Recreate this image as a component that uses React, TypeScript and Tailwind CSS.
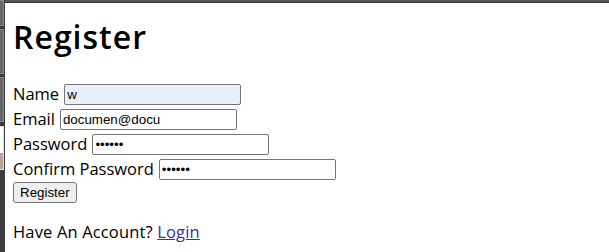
import React from "react";

const inputCls =
  "h-[21px] w-[177px] rounded-[2px] border border-[#767676] px-[2px] text-[13.33px] text-black outline-none [font-family:'Liberation_Sans',Arial,sans-serif]";

function Row({ label, children }: { label: string; children: React.ReactNode }) {
  return (
    <div className="flex h-[25px] items-center gap-[5px]">
      <span>{label}</span>
      {children}
    </div>
  );
}

export default function App() {
  return (
    <div className="flex h-[252px] w-[609px] overflow-hidden bg-white text-[16.5px] text-black [font-family:'Open_Sans',sans-serif]">
      {/* left window strip */}
      <div className="flex w-[5px] flex-col bg-[#3b3b3b]">
        <div className="h-[26px] w-[4px] border-y border-r border-[#8a8a8a] bg-[#666]" />
        <div className="mt-[3px] h-[45px] w-[4px] border-y border-r border-[#8a8a8a] bg-[#666]" />
        <div className="mt-[3px] h-[45px] w-[4px] border-y border-r border-[#8a8a8a] bg-[#666]" />
        <div className="mt-[4px] flex h-[44px] w-[4px] flex-col border-y border-r border-[#e0e0e0] bg-white">
          <div className="flex-1" />
          <div className="h-[16px] bg-[#b0a79f]" />
        </div>
      </div>

      <div className="flex flex-1 flex-col">
        <div className="h-[3px] border-b border-[#333] bg-[#555]" />
        <div className="pl-[8px]">
          <h1 className="mt-[14px] text-[32px] font-semibold leading-[40px] tracking-[1px]">Register</h1>

          <form className="mt-[25px]" onSubmit={(e) => e.preventDefault()}>
            <Row label="Name">
              <input className={`${inputCls} bg-[#e8f0fe]`} defaultValue="w" />
            </Row>
            <Row label="Email">
              <input className={`${inputCls} bg-white`} defaultValue="documen@docu" />
            </Row>
            <Row label="Password">
              <input type="password" className={`${inputCls} bg-white`} defaultValue="123456" />
            </Row>
            <Row label="Confirm Password">
              <input type="password" className={`${inputCls} bg-white`} defaultValue="123456" />
            </Row>
            <button
              type="submit"
              className="block h-[21px] rounded-[3px] border border-[#767676] bg-[#efefef] px-[6px] text-[13.33px] text-black [font-family:'Liberation_Sans',Arial,sans-serif]"
            >
              Register
            </button>
          </form>

          <p className="mt-[18px] leading-[22px] tracking-[0.15px]">
            Have An Account?{" "}
            <a href="#" className="text-[#3333a0] underline">
              Login
            </a>
          </p>
        </div>
      </div>
    </div>
  );
}
